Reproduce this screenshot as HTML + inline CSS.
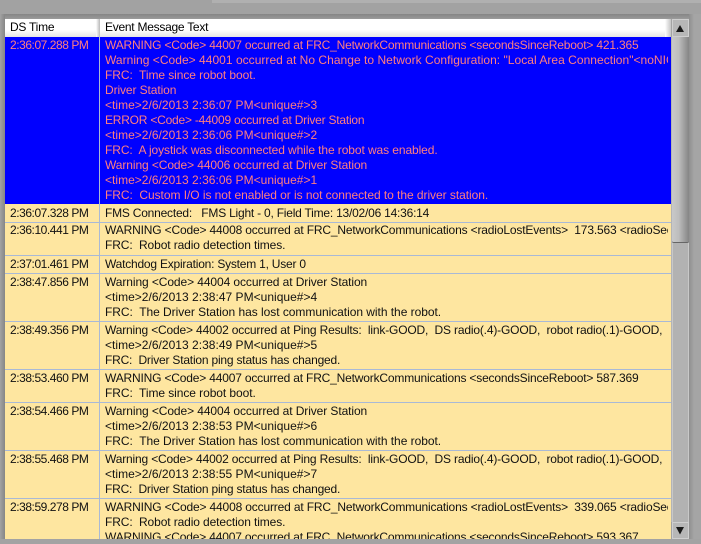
<!DOCTYPE html>
<html><head><meta charset="utf-8">
<style>
html,body{margin:0;padding:0;width:701px;height:544px;overflow:hidden;background:#a3a3a3}
*{box-sizing:border-box}
.abs{position:absolute}
#wrap{position:absolute;left:0;top:0;width:701px;height:544px;overflow:hidden;font-family:"Liberation Sans",sans-serif;font-size:12px}
.t{position:absolute;white-space:pre;line-height:15px;height:15px;letter-spacing:-.09px}
.tm{letter-spacing:-.45px}
#clip{position:absolute;left:5px;top:37px;width:666px;height:502px;overflow:hidden;background:#fee6a0}
.l{position:absolute;left:0;width:666px;height:1px;background:#a9b9d6}
.blue{color:#ff7f7f}
.blk{color:#111}
</style></head><body>
<div id="wrap">
<div class="abs" style="left:0;top:0;width:701px;height:14px;background:#a2a2a2"></div>
<div class="abs" style="left:212px;top:0;width:489px;height:3px;background:#b0b0b0"></div>
<div class="abs" style="left:0;top:14px;width:701px;height:5px;background:linear-gradient(#858585,#9b9b9b)"></div>
<div class="abs" style="left:0;top:14px;width:5px;height:530px;background:linear-gradient(90deg,#a3a3a3,#868686)"></div>
<div class="abs" style="left:5px;top:19px;width:666px;height:18px;background:linear-gradient(#fff 0,#fff 60%,#e4e4e4 100%)"></div>
<div class="abs" style="left:96px;top:19px;width:4px;height:18px;background:linear-gradient(90deg,#fff,#b8b8b8)"></div>
<div class="abs" style="left:665px;top:19px;width:6px;height:18px;background:linear-gradient(90deg,#fff,#c4c4c4)"></div>
<div class="t" style="left:10px;top:20px;color:#000;letter-spacing:-.25px">DS Time</div>
<div class="t" style="left:105px;top:20px;color:#000;letter-spacing:-.26px">Event Message Text</div>
<div id="clip">
<div class="abs" style="left:0;top:0;width:666px;height:167px;background:#0000ff"></div>
<div class="l" style="top:185px"></div>
<div class="l" style="top:218px"></div>
<div class="l" style="top:236px"></div>
<div class="l" style="top:284px"></div>
<div class="l" style="top:332px"></div>
<div class="l" style="top:365px"></div>
<div class="l" style="top:413px"></div>
<div class="l" style="top:461px"></div>
<div class="abs" style="left:94px;top:0;width:1px;height:502px;background:#a9b9d6"></div>
</div>
<div id="tx" class="abs" style="left:0;top:0;width:668px;height:539px;overflow:hidden">
<div class="t tm blue" style="left:10px;top:38px">2:36:07.288 PM</div>
<div class="t blue" style="left:105px;top:38px;letter-spacing:-.18px">WARNING &lt;Code&gt; 44007 occurred at FRC_NetworkCommunications &lt;secondsSinceReboot&gt; 421.365</div>
<div class="t blue" style="left:105px;top:53px;letter-spacing:.03px">Warning &lt;Code&gt; 44001 occurred at No Change to Network Configuration: "Local Area Connection"&lt;noNIC</div>
<div class="t blue" style="left:105px;top:68px;letter-spacing:-.07px">FRC:  Time since robot boot.</div>
<div class="t blue" style="left:105px;top:83px;letter-spacing:-.1px">Driver Station</div>
<div class="t blue" style="left:105px;top:98px;letter-spacing:.02px">&lt;time&gt;2/6/2013 2:36:07 PM&lt;unique#&gt;3</div>
<div class="t blue" style="left:105px;top:113px;letter-spacing:-.22px">ERROR &lt;Code&gt; -44009 occurred at Driver Station</div>
<div class="t blue" style="left:105px;top:128px;letter-spacing:.02px">&lt;time&gt;2/6/2013 2:36:06 PM&lt;unique#&gt;2</div>
<div class="t blue" style="left:105px;top:143px">FRC:  A joystick was disconnected while the robot was enabled.</div>
<div class="t blue" style="left:105px;top:158px">Warning &lt;Code&gt; 44006 occurred at Driver Station</div>
<div class="t blue" style="left:105px;top:173px;letter-spacing:.02px">&lt;time&gt;2/6/2013 2:36:06 PM&lt;unique#&gt;1</div>
<div class="t blue" style="left:105px;top:188px;letter-spacing:-.05px">FRC:  Custom I/O is not enabled or is not connected to the driver station.</div>

<div class="t tm blk" style="left:10px;top:206px">2:36:07.328 PM</div>
<div class="t blk" style="left:105px;top:206px;letter-spacing:-.22px">FMS Connected:   FMS Light - 0, Field Time: 13/02/06 14:36:14</div>

<div class="t tm blk" style="left:10px;top:223px">2:36:10.441 PM</div>
<div class="t blk" style="left:105px;top:223px;letter-spacing:-.16px">WARNING &lt;Code&gt; 44008 occurred at FRC_NetworkCommunications &lt;radioLostEvents&gt;  173.563 &lt;radioSeenEvents&gt;</div>
<div class="t blk" style="left:105px;top:238px;letter-spacing:-.11px">FRC:  Robot radio detection times.</div>

<div class="t tm blk" style="left:10px;top:257px">2:37:01.461 PM</div>
<div class="t blk" style="left:105px;top:257px;letter-spacing:-.22px">Watchdog Expiration: System 1, User 0</div>

<div class="t tm blk" style="left:10px;top:275px">2:38:47.856 PM</div>
<div class="t blk" style="left:105px;top:275px">Warning &lt;Code&gt; 44004 occurred at Driver Station</div>
<div class="t blk" style="left:105px;top:290px;letter-spacing:.02px">&lt;time&gt;2/6/2013 2:38:47 PM&lt;unique#&gt;4</div>
<div class="t blk" style="left:105px;top:305px;letter-spacing:-.04px">FRC:  The Driver Station has lost communication with the robot.</div>

<div class="t tm blk" style="left:10px;top:323px">2:38:49.356 PM</div>
<div class="t blk" style="left:105px;top:323px;letter-spacing:-.17px">Warning &lt;Code&gt; 44002 occurred at Ping Results:  link-GOOD,  DS radio(.4)-GOOD,  robot radio(.1)-GOOD,</div>
<div class="t blk" style="left:105px;top:338px;letter-spacing:.02px">&lt;time&gt;2/6/2013 2:38:49 PM&lt;unique#&gt;5</div>
<div class="t blk" style="left:105px;top:353px;letter-spacing:-.2px">FRC:  Driver Station ping status has changed.</div>

<div class="t tm blk" style="left:10px;top:371px">2:38:53.460 PM</div>
<div class="t blk" style="left:105px;top:371px;letter-spacing:-.18px">WARNING &lt;Code&gt; 44007 occurred at FRC_NetworkCommunications &lt;secondsSinceReboot&gt; 587.369</div>
<div class="t blk" style="left:105px;top:386px;letter-spacing:-.07px">FRC:  Time since robot boot.</div>

<div class="t tm blk" style="left:10px;top:404px">2:38:54.466 PM</div>
<div class="t blk" style="left:105px;top:404px">Warning &lt;Code&gt; 44004 occurred at Driver Station</div>
<div class="t blk" style="left:105px;top:419px;letter-spacing:.02px">&lt;time&gt;2/6/2013 2:38:53 PM&lt;unique#&gt;6</div>
<div class="t blk" style="left:105px;top:434px;letter-spacing:-.04px">FRC:  The Driver Station has lost communication with the robot.</div>

<div class="t tm blk" style="left:10px;top:452px">2:38:55.468 PM</div>
<div class="t blk" style="left:105px;top:452px;letter-spacing:-.17px">Warning &lt;Code&gt; 44002 occurred at Ping Results:  link-GOOD,  DS radio(.4)-GOOD,  robot radio(.1)-GOOD,</div>
<div class="t blk" style="left:105px;top:467px;letter-spacing:.02px">&lt;time&gt;2/6/2013 2:38:55 PM&lt;unique#&gt;7</div>
<div class="t blk" style="left:105px;top:482px;letter-spacing:-.2px">FRC:  Driver Station ping status has changed.</div>

<div class="t tm blk" style="left:10px;top:500px">2:38:59.278 PM</div>
<div class="t blk" style="left:105px;top:500px;letter-spacing:-.16px">WARNING &lt;Code&gt; 44008 occurred at FRC_NetworkCommunications &lt;radioLostEvents&gt;  339.065 &lt;radioSeenEvents&gt;</div>
<div class="t blk" style="left:105px;top:515px;letter-spacing:-.11px">FRC:  Robot radio detection times.</div>
<div class="t blk" style="left:105px;top:530px;letter-spacing:-.18px">WARNING &lt;Code&gt; 44007 occurred at FRC_NetworkCommunications &lt;secondsSinceReboot&gt; 593.367</div>
</div>

<!-- scrollbar -->
<div class="abs" style="left:671px;top:37px;width:18px;height:485px;background:#b4b4b4"></div>
<div class="abs" style="left:672px;top:37px;width:17px;height:206px;background:linear-gradient(90deg,#c9c9c9,#bdbdbd 40%,#858585);border-bottom:1px solid #666;border-radius:0 0 2px 2px"></div>
<div class="abs" style="left:672px;top:243px;width:17px;height:279px;background:#b2b2b2;border-left:1px solid #c8c8c8;border-right:1px solid #c8c8c8"></div>
<div class="abs" style="left:672px;top:19px;width:17px;height:18px;background:#b7b7b7;border:1px solid #cfcfcf"></div>
<div class="abs" style="left:672px;top:522px;width:17px;height:17px;background:#b7b7b7;border:1px solid #cfcfcf"></div>
<svg class="abs" style="left:672px;top:19px" width="17" height="18"><path d="M8 6L12 13H4Z" fill="#1a1a1a"/></svg>
<svg class="abs" style="left:672px;top:522px" width="17" height="17"><path d="M4 5H12L8 12.5Z" fill="#1a1a1a"/></svg>
<div class="abs" style="left:689px;top:14px;width:12px;height:530px;background:linear-gradient(90deg,#8f8f8f,#a5a5a5 5px)"></div>
<div class="abs" style="left:0;top:539px;width:701px;height:5px;background:#a3a3a3"></div>
</div>
</body></html>
